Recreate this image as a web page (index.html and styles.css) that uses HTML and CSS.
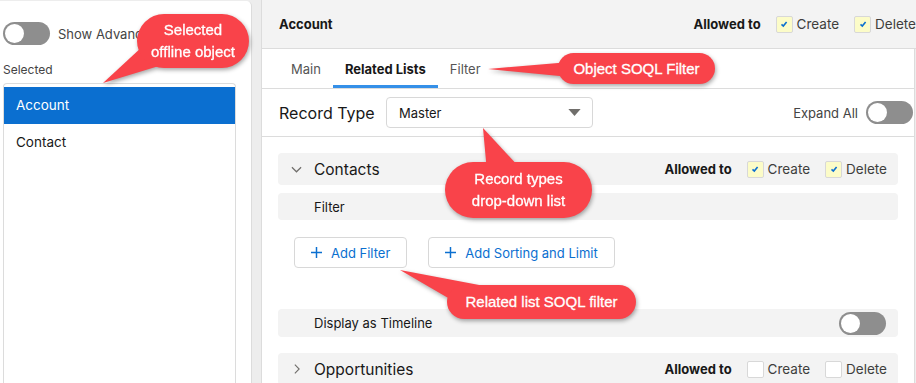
FILE: index.html
```html
<!DOCTYPE html>
<html lang="en">
<head>
    <meta charset="UTF-8">
    <title>Offline Objects - Related Lists</title>
    <link rel="stylesheet" href="styles.css">
</head>
<body>
    <div class="app">
        <aside class="sidebar">
            <div class="toggle-row">
                <span class="toggle"><span class="knob"></span></span>
                <span class="toggle-label">Show Advanced</span>
            </div>
            <div class="list-label">Selected</div>
            <ul class="object-list">
                <li class="active">Account</li>
                <li>Contact</li>
            </ul>
        </aside>

        <main class="main">
            <div class="main-header">
                <span class="object-name">Account</span>
                <div class="allowed">
                    <span class="allowed-label">Allowed to</span>
                    <label class="check"><span class="box checked"><svg viewBox="0 0 10 10"><path d="M2.5 5.3 L4.3 7 L7.6 3"/></svg></span>Create</label>
                    <label class="check"><span class="box checked"><svg viewBox="0 0 10 10"><path d="M2.5 5.3 L4.3 7 L7.6 3"/></svg></span>Delete</label>
                </div>
            </div>

            <nav class="tabs">
                <a href="#">Main</a>
                <a href="#" class="current">Related Lists</a>
                <a href="#">Filter</a>
            </nav>

            <div class="record-row">
                <span class="record-label">Record Type</span>
                <div class="select">
                    <span>Master</span>
                    <svg class="caret" viewBox="0 0 14 8"><path d="M0 0 H14 L7 8 Z"/></svg>
                </div>
                <div class="expand">
                    <span>Expand All</span>
                    <span class="toggle"><span class="knob"></span></span>
                </div>
            </div>

            <div class="sections">
                <div class="section-row big">
                    <svg class="chevron" viewBox="0 0 12 7"><path d="M1 1 L6 6 L11 1"/></svg>
                    <span class="section-title">Contacts</span>
                    <div class="allowed small">
                        <span class="allowed-label">Allowed to</span>
                        <label class="check"><span class="box checked"><svg viewBox="0 0 10 10"><path d="M2.5 5.3 L4.3 7 L7.6 3"/></svg></span>Create</label>
                        <label class="check"><span class="box checked"><svg viewBox="0 0 10 10"><path d="M2.5 5.3 L4.3 7 L7.6 3"/></svg></span>Delete</label>
                    </div>
                </div>
                <div class="section-row sub">
                    <span>Filter</span>
                </div>
                <div class="buttons">
                    <button><svg viewBox="0 0 12 12"><path d="M6 0 V12 M0 6 H12"/></svg>Add Filter</button>
                    <button><svg viewBox="0 0 12 12"><path d="M6 0 V12 M0 6 H12"/></svg>Add Sorting and Limit</button>
                </div>
                <div class="section-row sub timeline">
                    <span>Display as Timeline</span>
                    <span class="toggle"><span class="knob"></span></span>
                </div>
                <div class="section-row big">
                    <svg class="chevron right" viewBox="0 0 7 12"><path d="M1 1 L6 6 L1 11"/></svg>
                    <span class="section-title">Opportunities</span>
                    <div class="allowed small">
                        <span class="allowed-label">Allowed to</span>
                        <label class="check"><span class="box"></span>Create</label>
                        <label class="check"><span class="box"></span>Delete</label>
                    </div>
                </div>
            </div>
        </main>
    </div>

    <!-- annotation callouts drawn over the screenshot -->
    <div class="callouts">
        <svg class="tails" viewBox="0 0 916 383">
            <polygon points="103,83 143,46 172,62"/>
            <polygon points="488,69 570,62 570,77"/>
            <polygon points="483,128 487,172 520,168"/>
            <polygon points="400,270 495,288 462,306"/>
        </svg>
        <div class="bubble b1">Selected<br>offline object</div>
        <div class="bubble b2">Object SOQL Filter</div>
        <div class="bubble b3">Record types<br>drop-down list</div>
        <div class="bubble b4">Related list SOQL filter</div>
    </div>
</body>
</html>
```

FILE: styles.css
```css
body {
    margin: 0;
    width: 916px;
    height: 383px;
    overflow: hidden;
    position: relative;
    background-color: #ededed;
    font-family: 'Inter', 'Liberation Sans', sans-serif;
    font-size: 13px;
    color: #181818;
}

.app {
    display: flex;
    gap: 9px;
    height: 383px;
    padding-top: 1px;
    box-sizing: border-box;
}

/* left column */
.sidebar {
    width: 252px;
    flex-shrink: 0;
    background: white;
    border-right: 1px solid #dcdcdc;
    border-radius: 0 5px 0 0;
    padding: 21px 15px 0 3px;
    box-sizing: border-box;
}

.toggle-row {
    display: flex;
    align-items: center;
    gap: 8px;
    height: 23px;
}

.toggle-label {
    color: #444;
    white-space: nowrap;
}

.toggle {
    display: inline-block;
    position: relative;
    width: 47px;
    height: 23px;
    border-radius: 12px;
    background: #8e8e8e;
    flex-shrink: 0;
}

.toggle .knob {
    position: absolute;
    left: 2px;
    top: 2px;
    width: 19px;
    height: 19px;
    border-radius: 50%;
    background: white;
}

.list-label {
    margin-top: 17px;
    color: #444;
    font-size: 12px;
}

.object-list {
    list-style: none;
    margin: 6px 0 0;
    padding: 3px 0 0;
    border: 1px solid #dcdcdc;
    border-bottom: none;
    border-radius: 4px 4px 0 0;
    height: 300px;
}

.object-list li {
    height: 37px;
    line-height: 37px;
    padding-left: 12px;
    font-size: 13.5px;
}

.object-list li.active {
    background: #0b6fd0;
    color: white;
}

/* right column */
.main {
    flex: 1;
    background: white;
    border-left: 1px solid #dcdcdc;
    border-right: 1px solid #dcdcdc;
    margin-right: 1px;
    margin-top: -1px;
}

.main-header {
    height: 48px;
    background: #f3f3f3;
    border-bottom: 1px solid #dcdcdc;
    display: flex;
    align-items: center;
    justify-content: space-between;
    padding: 0 0 0 17px;
    margin-right: -2px;
}

.object-name {
    font-weight: 700;
}

.allowed {
    display: flex;
    align-items: center;
}

.allowed-label {
    font-weight: 700;
    margin-right: 15px;
}

.check {
    display: flex;
    align-items: center;
    font-size: 13.5px;
    color: #3e3e3c;
    margin-right: 15px;
}

.check:last-child {
    margin-right: 0;
}

.box {
    width: 15px;
    height: 15px;
    border: 1px solid #d8d8d8;
    border-radius: 2px;
    background: white;
    margin-right: 4px;
    display: flex;
    align-items: center;
    justify-content: center;
}

.box.checked {
    background: #fcfcc8;
}

.box svg {
    width: 10px;
    height: 10px;
    fill: none;
    stroke: #0b6fd0;
    stroke-width: 1.6;
}

.tabs {
    height: 39px;
    display: flex;
    padding-left: 17px;
    border-bottom: 1px solid #dcdcdc;
}

.tabs a {
    padding: 2px 12px 0;
    line-height: 37px;
    color: #555;
    text-decoration: none;
    box-sizing: border-box;
    height: 39px;
}

.tabs a.current {
    color: #181818;
    font-weight: 700;
    border-bottom: 3px solid #3590e8;
}

.record-row {
    height: 47px;
    display: flex;
    align-items: center;
    padding: 0 1px 0 17px;
    border-bottom: 1px solid #dcdcdc;
}

.record-label {
    font-size: 16px;
    width: 107px;
}

.select {
    width: 207px;
    height: 31px;
    box-sizing: border-box;
    border: 1px solid #d8d8d8;
    border-radius: 4px;
    display: flex;
    align-items: center;
    justify-content: space-between;
    padding: 0 11px 0 12px;
}

.caret {
    width: 13px;
    height: 7px;
    fill: #706e6b;
}

.expand {
    margin-left: auto;
    display: flex;
    align-items: center;
    gap: 8px;
    color: #444;
}

.sections {
    padding: 16px 16px 0 16px;
}

.section-row {
    background: #f3f3f3;
    border-radius: 4px;
    display: flex;
    align-items: center;
    padding: 0 11px 0 36px;
}

.section-row.big {
    height: 32px;
    position: relative;
    margin-bottom: 8px;
}

.section-row.sub {
    height: 27px;
}

.section-title {
    font-size: 15.5px;
}

.chevron {
    position: absolute;
    left: 13px;
    width: 11px;
    height: 7px;
    fill: none;
    stroke: #706e6b;
    stroke-width: 1.3;
}

.chevron.right {
    left: 16px;
    width: 6px;
    height: 12px;
}

.allowed.small {
    margin-left: auto;
}

.buttons {
    display: flex;
    gap: 21px;
    padding: 17px 0 0 16px;
    height: 31px;
    margin-bottom: 41px;
}

.buttons button {
    height: 31px;
    border: 1px solid #d8d8d8;
    border-radius: 4px;
    background: white;
    color: #0b6fd0;
    font-family: inherit;
    font-size: 13px;
    padding: 0 16px;
    display: flex;
    align-items: center;
    gap: 9px;
}

.buttons button svg {
    width: 11px;
    height: 11px;
    stroke: #0b6fd0;
    stroke-width: 1.6;
}

.section-row.timeline {
    height: 28px;
    justify-content: space-between;
    padding-right: 12px;
    margin-bottom: 16px;
}

/* callouts */
.callouts {
    position: absolute;
    left: 0;
    top: 0;
    width: 916px;
    height: 383px;
    pointer-events: none;
    filter: drop-shadow(1px 2px 2px rgba(0, 0, 0, 0.35));
}

.tails {
    position: absolute;
    left: 0;
    top: 0;
    width: 916px;
    height: 383px;
    fill: #f9434a;
}

.bubble {
    position: absolute;
    background: #f9434a;
    color: white;
    font-family: 'Liberation Sans', sans-serif;
    font-size: 15px;
    line-height: 22px;
    text-align: center;
    -webkit-text-stroke: 0.3px white;
    display: flex;
    align-items: center;
    justify-content: center;
}

.b1 {
    left: 137px;
    top: 14px;
    width: 112px;
    height: 54px;
    border-radius: 27px;
}

.b2 {
    left: 558px;
    top: 53px;
    width: 157px;
    height: 31px;
    border-radius: 16px;
}

.b3 {
    left: 445px;
    top: 162px;
    width: 147px;
    height: 56px;
    border-radius: 28px;
}

.b4 {
    left: 447px;
    top: 285px;
    width: 189px;
    height: 34px;
    border-radius: 17px;
}
```
